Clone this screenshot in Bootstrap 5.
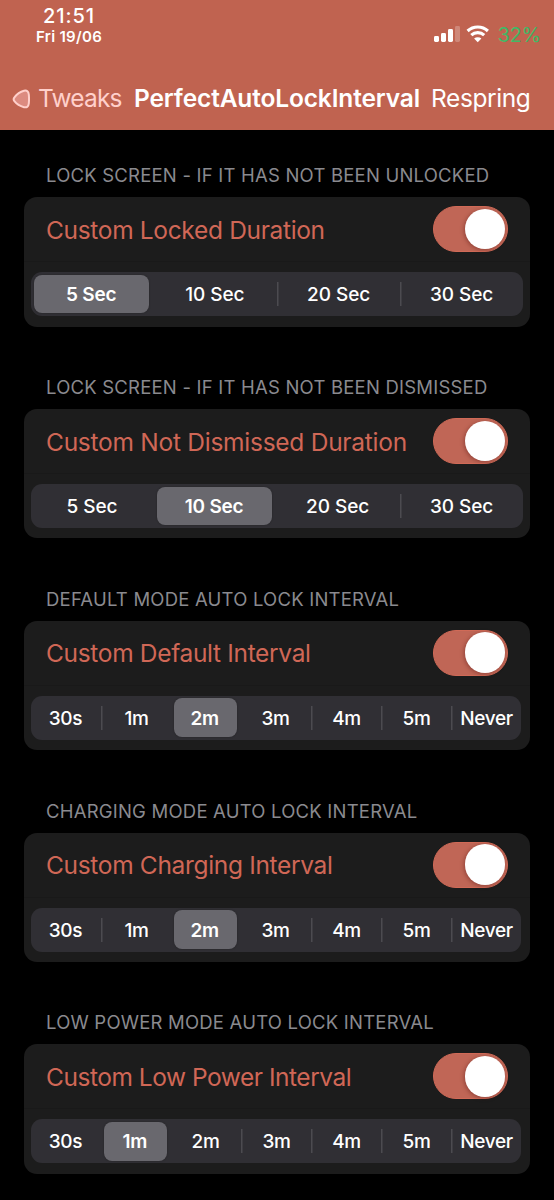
<!DOCTYPE html>
<html lang="en" data-bs-theme="dark">
<head>
<meta charset="utf-8">
<meta name="viewport" content="width=device-width, initial-scale=1">
<title>PerfectAutoLockInterval</title>
<link href="https://cdn.jsdelivr.net/npm/bootstrap@5.3.0/dist/css/bootstrap.min.css" rel="stylesheet">
<style>
  body { font-family: Inter, "Liberation Sans", sans-serif; background: #000; color: #fff; line-height: 1; overflow: hidden; white-space: nowrap; }
  .app-header { height: 130px; background: #c06350; }
  .status-bar { height: 66px; padding: 5px 13px 0 35px; }
  .clock { width: 68px; }
  .clock-time { font-size: 20px; line-height: 22px; font-weight: 500; letter-spacing: .9px; }
  .clock-date { font-size: 15px; line-height: 20px; font-weight: 600; letter-spacing: .3px; }
  .status-icons { padding-top: 19px; }
  .battery { font-size: 20px; line-height: 22px; letter-spacing: -.2px; color: #43b866; }
  .nav-row { height: 64px; font-size: 24.5px; padding: 0 0 0 12px; }
  .back-link { color: #ffd0cb; font-weight: 400; letter-spacing: -.8px; width: 122px; }
  .page-title { font-size: 24.5px; font-weight: 600; letter-spacing: -.14px; width: 297px; padding-top: 1px; }
  .respring { font-weight: 400; letter-spacing: -.4px; }
  .settings { padding: 32px 24px 0; }
  .group { height: 211.85px; }
  .group-label { height: 35px; line-height: 27px; padding-left: 22px; font-size: 18.5px; font-weight: 400; letter-spacing: .21px; color: #8a8a8f; margin: 0; }
  .pref-card { height: 129.5px; border-radius: 13px; background: #1c1c1c; border: 0; }
  .pref-row { height: 65px; padding: 0 22px; border-bottom: 1px solid #191919; }
  .pref-name { font-size: 24.5px; font-weight: 400; color: #d06756; letter-spacing: -.33px; padding-top: 2px; }
  .pref-name.loose { letter-spacing: -.26px; }
  .pref-name.tight { letter-spacing: -.47px; }
  .switch.form-check-input { width: 75.5px; height: 46px; margin: 0; border: 1px solid #d06a57; border-radius: 23px; background: #c06656; display: flex; align-items: center; justify-content: flex-end; padding-right: 2px; }
  .knob { width: 40.5px; height: 40.5px; border-radius: 50%; background: #fff; box-shadow: -1px 1px 4px rgba(60,0,0,.35); }
  .segments { display: grid; grid-template-columns: repeat(4, minmax(0, 1fr)); height: 44px; margin: 10px 7.5px 0 7px; border-radius: 11px; background: #302f34; }
  .segments.seven { margin-right: 9px; grid-template-columns: repeat(7, minmax(0, 1fr)); }
  .seg { height: 44px; display: flex; align-items: center; justify-content: center; font-size: 19px; font-weight: 500; letter-spacing: -.05px; padding: 1px 1px 0 0; }
  .seg.divided { padding: 1px 0 0 1px; background: linear-gradient(#4c4b50,#4c4b50) left center/1.5px 24px no-repeat; }
  .seven .seg { letter-spacing: -.3px; }
  .seg.chosen { height: 38.5px; align-self: center; margin: 0 4.5px 0 3px; background: #69686e; border-radius: 8px; font-weight: 600; letter-spacing: -.2px; box-shadow: 0 0 2px rgba(0,0,0,.3); }
</style>
</head>
<body>
<header class="app-header">
  <div class="status-bar d-flex justify-content-between">
    <div class="clock text-center">
      <div class="clock-time">21:51</div>
      <div class="clock-date">Fri 19/06</div>
    </div>
    <div class="status-icons d-flex align-items-start">
      <svg width="58" height="22" viewBox="0 0 58 22" fill="#fff" aria-hidden="true">
        <rect x="3" y="12" width="5" height="6" rx="1.4"/>
        <rect x="10" y="9" width="5" height="9" rx="1.4"/>
        <rect x="17" y="5" width="5" height="13" rx="1.4"/>
        <rect x="24" y="2" width="5" height="16" rx="1.4" opacity=".24"/>
        <g fill="none" stroke="#fff" stroke-width="3.1">
          <path d="M36.6 7a14.8 14.8 0 0 1 20.3 0"/>
          <path d="M40.3 11.2a9.4 9.4 0 0 1 12.9 0"/>
        </g>
        <path d="M43.1 14.6a5.4 5.4 0 0 1 7.3 0L46.75 18.2z"/>
      </svg>
      <span class="battery ms-2">32%</span>
    </div>
  </div>
  <nav class="nav-row d-flex align-items-center">
    <a class="back-link d-flex align-items-center text-decoration-none">
      <svg class="me-2" width="18" height="22" viewBox="0 0 18 22" aria-hidden="true"><path d="M2.4 10.4C4.500 7.600 8 4.800 12 3.800 15 3.100 16.500 4.500 16.800 7.500 17.100 10.500 17.100 13.500 16.800 16.500 16.500 19.500 15 20.800 12 20.200 8 19.200 4.500 16.900 2.400 14.200 1.200 12.700 1.300 11.800 2.400 10.400z" fill="#dc8b80" stroke="#ffd0cb" stroke-width="2"/></svg>Tweaks
    </a>
    <h1 class="page-title m-0">PerfectAutoLockInterval</h1>
    <a class="respring text-white text-decoration-none">Respring</a>
  </nav>
</header>
<main class="settings">
  <section class="group">
    <h2 class="group-label">LOCK SCREEN - IF IT HAS NOT BEEN UNLOCKED</h2>
    <div class="card pref-card">
      <div class="pref-row d-flex align-items-center justify-content-between"><span class="pref-name">Custom Locked Duration</span><span class="switch form-check-input"><span class="knob"></span></span></div>
      <div class="segments"><span class="seg chosen">5 Sec</span><span class="seg">10 Sec</span><span class="seg divided">20 Sec</span><span class="seg divided">30 Sec</span></div>
    </div>
  </section>
  <section class="group">
    <h2 class="group-label">LOCK SCREEN - IF IT HAS NOT BEEN DISMISSED</h2>
    <div class="card pref-card">
      <div class="pref-row d-flex align-items-center justify-content-between"><span class="pref-name loose">Custom Not Dismissed Duration</span><span class="switch form-check-input"><span class="knob"></span></span></div>
      <div class="segments"><span class="seg">5 Sec</span><span class="seg chosen">10 Sec</span><span class="seg">20 Sec</span><span class="seg divided">30 Sec</span></div>
    </div>
  </section>
  <section class="group">
    <h2 class="group-label">DEFAULT MODE AUTO LOCK INTERVAL</h2>
    <div class="card pref-card">
      <div class="pref-row d-flex align-items-center justify-content-between"><span class="pref-name">Custom Default Interval</span><span class="switch form-check-input"><span class="knob"></span></span></div>
      <div class="segments seven"><span class="seg">30s</span><span class="seg divided">1m</span><span class="seg chosen">2m</span><span class="seg">3m</span><span class="seg divided">4m</span><span class="seg divided">5m</span><span class="seg divided">Never</span></div>
    </div>
  </section>
  <section class="group">
    <h2 class="group-label">CHARGING MODE AUTO LOCK INTERVAL</h2>
    <div class="card pref-card">
      <div class="pref-row d-flex align-items-center justify-content-between"><span class="pref-name">Custom Charging Interval</span><span class="switch form-check-input"><span class="knob"></span></span></div>
      <div class="segments seven"><span class="seg">30s</span><span class="seg divided">1m</span><span class="seg chosen">2m</span><span class="seg">3m</span><span class="seg divided">4m</span><span class="seg divided">5m</span><span class="seg divided">Never</span></div>
    </div>
  </section>
  <section class="group">
    <h2 class="group-label">LOW POWER MODE AUTO LOCK INTERVAL</h2>
    <div class="card pref-card">
      <div class="pref-row d-flex align-items-center justify-content-between"><span class="pref-name tight">Custom Low Power Interval</span><span class="switch form-check-input"><span class="knob"></span></span></div>
      <div class="segments seven"><span class="seg">30s</span><span class="seg chosen">1m</span><span class="seg">2m</span><span class="seg divided">3m</span><span class="seg divided">4m</span><span class="seg divided">5m</span><span class="seg divided">Never</span></div>
    </div>
  </section>
</main>
<script src="https://cdn.jsdelivr.net/npm/bootstrap@5.3.0/dist/js/bootstrap.bundle.min.js"></script>
</body>
</html>
